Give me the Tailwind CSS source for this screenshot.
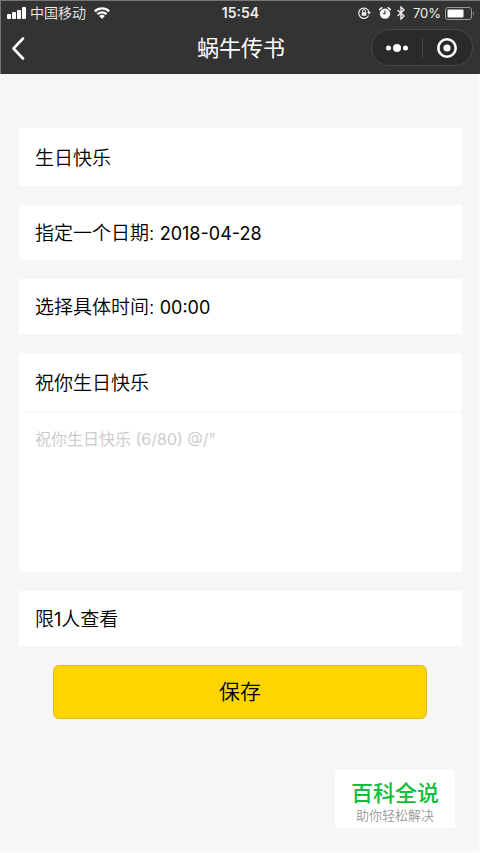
<!DOCTYPE html>
<html lang="zh-CN">
<head>
<meta charset="utf-8">
<meta name="viewport" content="width=device-width, initial-scale=1">
<title>蜗牛传书</title>
<script src="https://cdn.jsdelivr.net/npm/@tailwindcss/browser@4"></script>
</head>
<body class="min-h-screen flex flex-col bg-[#f6f6f6] text-black font-['Inter','Noto_Sans_CJK_SC',sans-serif]">
<header class="bg-[#333333] text-white border-t border-l border-[#777777]">
  <div class="grid grid-cols-3 items-center h-6 px-1.5 leading-5 text-[#eeeeee]">
    <div class="flex items-center">
      <svg class="w-[19px] h-3 shrink-0" viewBox="0 0 19 12" fill="#fff" aria-hidden="true">
        <rect x="0" y="7" width="4" height="5" rx="1"/><rect x="5" y="5" width="4" height="7" rx="1"/><rect x="10" y="3" width="4" height="9" rx="1"/><rect x="15" y="0" width="4" height="12" rx="1"/>
      </svg>
      <span class="ml-1 text-sm leading-5 font-[350] whitespace-nowrap">中国移动</span>
      <svg class="ml-2 w-4 h-3 shrink-0" viewBox="0 0 16 12" fill="none" stroke="#fff" stroke-width="2.2" aria-hidden="true">
        <path d="M.8 4.4a10.3 10.3 0 0 1 14.4 0M3.4 7.2a6.6 6.6 0 0 1 9.2 0"/><path d="M8 12 5.2 9.1a4 4 0 0 1 5.6 0Z" fill="#fff" stroke="none"/>
      </svg>
    </div>
    <time class="text-center font-semibold text-sm leading-5">15:54</time>
    <div class="flex items-center justify-end">
      <svg class="w-[13px] h-3 shrink-0" viewBox="0 0 13 12" fill="none" stroke="#eee" aria-hidden="true">
        <path d="M10.6 8.6A5.2 5.2 0 1 1 11 5" stroke-width="1.2"/><path d="M9 5h4l-2 2.6Z" fill="#eee" stroke="none"/><rect x="3.7" y="5.2" width="4.6" height="3.6" fill="#eee" stroke="none"/><path d="M4.6 5.4V4a1.4 1.4 0 0 1 2.8 0v1.4"/>
      </svg>
      <svg class="ml-2 w-3 h-3 shrink-0" viewBox="0 0 12 12" aria-hidden="true">
        <circle cx="6" cy="6.6" r="5.2" fill="#fff"/><path d="M.6 2.6 2.8.7M11.4 2.6 9.2.7" stroke="#fff" stroke-width="1.5" stroke-linecap="round"/><path d="M6 3.6v3.2H3.8" fill="none" stroke="#333" stroke-width="1.1"/>
      </svg>
      <svg class="ml-1.5 w-2 h-3.5 shrink-0" viewBox="0 0 8 14" fill="none" stroke="#eee" stroke-width="1.4" aria-hidden="true"><path d="m.6 4 6.4 6L4 13V1l3 3-6.4 6"/></svg>
      <span class="ml-2 text-[13px] leading-5">70%</span>
      <svg class="ml-1 w-[29px] h-[13px] shrink-0" viewBox="0 0 29 13" aria-hidden="true">
        <rect x=".5" y=".5" width="26" height="12" rx="2.5" fill="none" stroke="#999"/><rect x="2.5" y="2.5" width="16" height="8" rx="1" fill="#fff"/><path d="M28 4.5a2.5 2.5 0 0 1 0 4Z" fill="#999"/>
      </svg>
    </div>
  </div>
  <div class="grid grid-cols-3 items-center h-[49px] pl-2 pr-[7px] pb-1">
    <button type="button" aria-label="返回" class="justify-self-start">
      <svg class="w-4 h-6" viewBox="0 0 16 24" fill="none" stroke="#fff" stroke-width="2.6" stroke-linecap="round" stroke-linejoin="round" aria-hidden="true"><path d="M14 2.5 4.5 12.5 14 22.5"/></svg>
    </button>
    <h1 class="text-center text-[22px] leading-8 whitespace-nowrap">蜗牛传书</h1>
    <div class="justify-self-end flex items-center w-[102px] h-[37px] rounded-full border border-[#484848] bg-[#2a2a2a]">
      <button type="button" aria-label="更多" class="flex-1 flex justify-center">
        <svg class="w-6 h-2" viewBox="0 0 24 8" fill="#fff" aria-hidden="true"><circle cx="3.5" cy="4" r="2.5"/><circle cx="12" cy="4" r="4"/><circle cx="20.5" cy="4" r="2.5"/></svg>
      </button>
      <span class="w-px h-5 bg-[#464646]"></span>
      <button type="button" aria-label="关闭" class="flex-1 flex justify-center">
        <svg class="w-5 h-5" viewBox="0 0 20 20" aria-hidden="true"><circle cx="10" cy="10" r="8.7" fill="none" stroke="#fff" stroke-width="2.6"/><circle cx="10" cy="10" r="3.6" fill="#fff"/></svg>
      </button>
    </div>
  </div>
</header>
<main class="flex-1 flex flex-col border-r-2 border-b-2 border-[#fcfcfc]">
  <form class="flex flex-col gap-[19px] pt-[54px] pl-[19px] pr-4 text-[19px] font-[350]">
    <input type="text" aria-label="标题" value="生日快乐" class="w-full h-[58px] px-4 pb-0.5 bg-white">
    <button type="button" class="w-full h-[55px] px-4 pt-1 bg-white text-left">指定一个日期: <span class="text-lg font-normal">2018-04-28</span></button>
    <button type="button" class="w-full h-[55px] px-4 pt-1 bg-white text-left">选择具体时间: <span class="text-lg font-normal">00:00</span></button>
    <div class="flex flex-col bg-white">
      <input type="text" aria-label="祝福语" value="祝你生日快乐" class="w-full h-[59px] px-4 pb-0.5">
      <textarea aria-label="内容" placeholder="祝你生日快乐 (6/80) @/&quot;" class="block w-full h-40 px-4 pt-3.5 resize-none border-t border-[#f6f6f6] text-base leading-6 font-normal placeholder:text-[#cccccc]"></textarea>
    </div>
    <button type="button" class="w-full h-[55px] px-4 pt-1 bg-white text-left">限<span class="text-lg font-normal">1</span>人查看</button>
    <button type="submit" class="h-[54px] ml-[34px] mr-[35px] rounded-md border border-[#d5b823] bg-[#ffd500] text-[21px]">保存</button>
  </form>
  <aside class="self-end mt-auto mr-[23px] mb-[23px] flex flex-col items-center px-[13px] pt-[11px] pb-1 bg-white">
    <strong class="font-medium text-[22px] leading-[25px] text-[#0dbf3c]">百科全说</strong>
    <span class="px-2 text-[13px] leading-[18px] text-[#999999] font-[350]">助你轻松解决</span>
  </aside>
</main>
</body>
</html>
